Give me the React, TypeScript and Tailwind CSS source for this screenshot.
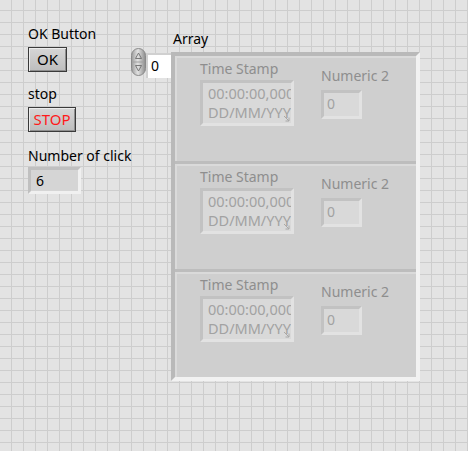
const font = { fontFamily: '"Noto Sans", "Open Sans", sans-serif' }

function Spinner() {
  return (
    <svg width="15" height="28" viewBox="0 0 15 28">
      <defs>
        <linearGradient id="sp" x1="0" x2="1" y1="0" y2="0">
          <stop offset="0" stopColor="#9a9a9a" />
          <stop offset="0.45" stopColor="#e2e2e2" />
          <stop offset="1" stopColor="#8c8c8c" />
        </linearGradient>
      </defs>
      <rect x="0.5" y="0.5" width="14" height="27" rx="7" fill="url(#sp)" stroke="#8a8a8a" />
      <line x1="2" y1="14" x2="13" y2="14" stroke="#a0a0a0" />
      <path d="M4.5 10.5 L7.5 5 L10.5 10.5 Z" fill="none" stroke="#6e6e6e" strokeWidth="0.9" />
      <path d="M4.5 17.5 L7.5 23 L10.5 17.5 Z" fill="none" stroke="#6e6e6e" strokeWidth="0.9" />
    </svg>
  )
}

function Element() {
  return (
    <div className="h-[105px] bg-[#cfcfcf] border-t-2 border-l-2 border-t-[#dadada] border-l-[#dadada] flex">
      <div className="ml-[23px] mt-[1px] w-[94px]">
        <div className="text-[14px] leading-[19px] text-[#8e8e8e] whitespace-nowrap">Time Stamp</div>
        <div className="mt-[2px] h-[46px] w-[94px] bg-[#d9d9d9] border-[3px] border-t-[#c2c2c2] border-l-[#c2c2c2] border-r-[#e2e2e2] border-b-[#e2e2e2] relative overflow-hidden">
          <div className="pl-[5px] pt-[1px] text-[14.5px] leading-[19px] text-[#a2a2a2] whitespace-nowrap">
            <div>00:00:00,000</div>
            <div>DD/MM/YYYY</div>
          </div>
          <svg className="absolute right-[1px] bottom-[1px]" width="7" height="7" viewBox="0 0 7 7">
            <path d="M1 1 L6 6 M6 2.5 L6 6 L2.5 6" stroke="#a8a8a8" fill="none" />
          </svg>
        </div>
      </div>
      <div className="ml-[27px] mt-[8px]">
        <div className="text-[14px] leading-[19px] text-[#8e8e8e] whitespace-nowrap">Numeric 2</div>
        <div className="mt-[5px] h-[29px] w-[41px] bg-[#d9d9d9] border-[3px] border-t-[#c2c2c2] border-l-[#c2c2c2] border-r-[#e2e2e2] border-b-[#e2e2e2] pl-[3px] text-[14px] leading-[21px] text-[#a2a2a2]">
          0
        </div>
      </div>
    </div>
  )
}

export default function App() {
  return (
    <div
      style={font}
      className="w-[468px] h-[451px] overflow-hidden bg-[#e3e3e3] bg-[linear-gradient(to_right,#cdcdcd_1px,transparent_1px),linear-gradient(to_bottom,#cdcdcd_1px,transparent_1px)] [background-size:12px_12px] [background-position:11px_10px] flex items-start text-black"
    >
      {/* controls */}
      <div className="ml-[28px] mt-[24px] w-[103px] shrink-0">
        <div className="text-[14px] leading-[19px] whitespace-nowrap">OK Button</div>
        <div className="mt-[4px] w-[39px] h-[25px] border border-[#3a3a3a] bg-[linear-gradient(to_bottom,#d6d6d6,#bdbdbd)] shadow-[inset_1px_1px_0_#ececec,inset_-1px_-1px_0_#8e8e8e] flex items-center justify-center text-[15px]">
          OK
        </div>
        <div className="mt-[12px] text-[14px] leading-[19px]">stop</div>
        <div className="mt-[4px] w-[48px] h-[25px] border border-[#3a3a3a] bg-[linear-gradient(to_bottom,#d6d6d6,#bdbdbd)] shadow-[inset_1px_1px_0_#ececec,inset_-1px_-1px_0_#8e8e8e] flex items-center justify-center text-[15px] text-[#ff1a1a]">
          STOP
        </div>
        <div className="mt-[14px] text-[14px] leading-[19px] whitespace-nowrap">Number of click</div>
        <div className="mt-[2px] w-[53px] h-[27px] bg-[#d5d5d5] border-[3px] border-t-[#c0c0c0] border-l-[#c0c0c0] border-r-[#f0f0f0] border-b-[#f0f0f0] pl-[5px] text-[14px] leading-[21px]">
          6
        </div>
      </div>

      {/* index */}
      <div className="mt-[48px] flex items-start shrink-0">
        <Spinner />
        <div className="mt-[5px] w-[25px] h-[25px] bg-white border-l-2 border-t-2 border-l-[#d0d0d0] border-t-[#d0d0d0] pl-[3px] text-[14px] leading-[21px]">
          0
        </div>
      </div>

      {/* array */}
      <div className="mt-[29px] shrink-0">
        <div className="pl-[2px] text-[14px] leading-[19px]">Array</div>
        <div className="mt-[4px] w-[249px] border-4 border-t-[#b9b9b9] border-l-[#b9b9b9] border-r-[#f2f2f2] border-b-[#f2f2f2] bg-[#bdbdbd] flex flex-col gap-[3px]">
          <Element />
          <Element />
          <Element />
        </div>
      </div>
    </div>
  )
}
